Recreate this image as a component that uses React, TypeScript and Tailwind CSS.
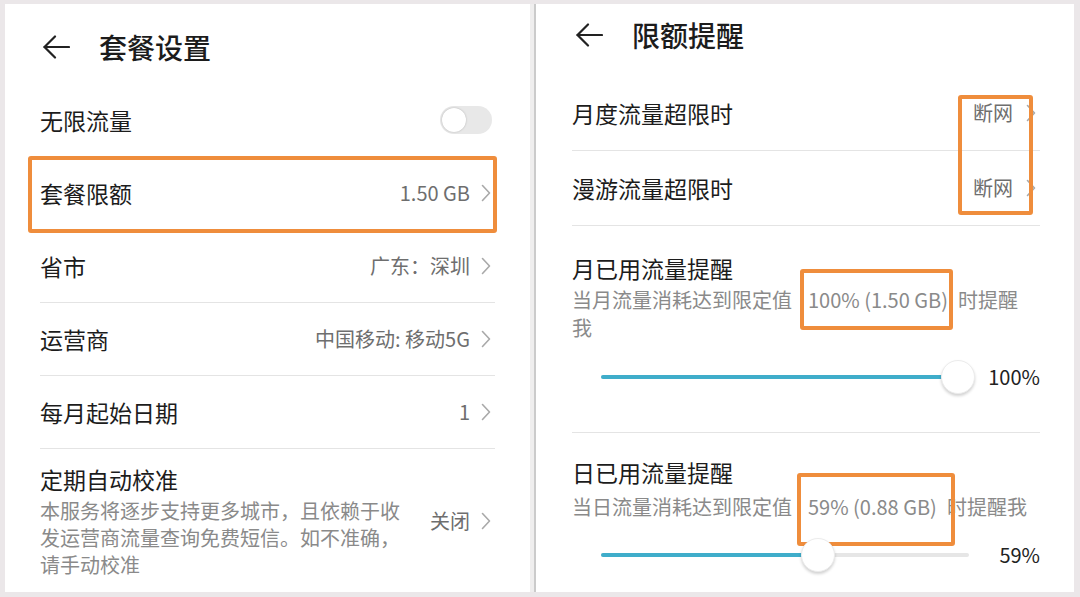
import React from 'react';

const ORANGE = 'border-[#ef8d3c]';

function BackArrow() {
  return (
    <svg width="28" height="24" viewBox="0 0 28 24" fill="none" stroke="#222" strokeWidth="2.2" strokeLinecap="round" strokeLinejoin="round">
      <path d="M27 12H2.5" />
      <path d="M13 1.5L2.5 12 13 22.5" />
    </svg>
  );
}

function Chevron() {
  return (
    <svg width="10" height="18" viewBox="0 0 10 18" fill="none" stroke="#a9a9a9" strokeWidth="1.6" strokeLinecap="round" strokeLinejoin="round">
      <path d="M1.5 1.5L8.5 9 1.5 16.5" />
    </svg>
  );
}

function Toggle() {
  return (
    <div className="w-[52px] h-[28px] rounded-full bg-[#e8e8e8] p-[2px] mr-[3px] flex items-center">
      <div className="w-[24px] h-[24px] rounded-full bg-white shadow-[0_0_2px_rgba(0,0,0,0.25)]" />
    </div>
  );
}

function Slider({ value, label }: { value: number; label: string }) {
  return (
    <div className="flex items-center gap-[30px] pl-[29px]">
      <div className="relative flex-1 h-[36px] flex items-center">
        <div className="w-full h-[4px] rounded-full bg-[#e6e6e6]">
          <div className="h-full rounded-full bg-[#3fadca]" style={{ width: `${value}%` }} />
        </div>
        <div
          className="absolute top-[1px] w-[34px] h-[34px] rounded-full bg-white border border-[#ececec] shadow-[0_2px_3px_rgba(0,0,0,0.18)]"
          style={{ left: `calc(${value}% - 17px)` }}
        />
      </div>
      <span className="text-[20px] text-[#222]">{label}</span>
    </div>
  );
}

function Row({
  label,
  value,
  right,
  height,
  gap = 'gap-[11px]',
  highlight,
}: {
  label: string;
  value?: string;
  right?: React.ReactNode;
  height: string;
  gap?: string;
  highlight?: boolean;
}) {
  return (
    <div className={`relative ${height} flex items-center justify-between border-b border-[#e4e4e4]`}>
      <span className="text-[23px] text-[#1c1c1c]">{label}</span>
      {right ?? (
        <div className={`flex items-center ${gap} pr-[4px]`}>
          <span className="text-[20px] text-[#6e6e6e]">{value}</span>
          <Chevron />
        </div>
      )}
      {highlight && (
        <span className={`absolute left-[-12px] right-[-2px] top-[-1px] bottom-[-4px] border-[4px] ${ORANGE} rounded-[3px]`} />
      )}
    </div>
  );
}

function PlanSettings() {
  return (
    <section className="w-[525px] bg-white px-[35px] flex flex-col">
      <header className="h-[80px] flex items-start gap-[29px] pt-[26px] pl-[2px]">
        <div className="h-[34px] flex items-center">
          <BackArrow />
        </div>
        <h1 className="text-[28px] leading-[34px] font-medium text-[#1c1c1c]">套餐设置</h1>
      </header>

      <Row label="无限流量" height="h-[73px]" right={<Toggle />} />
      <Row label="套餐限额" value="1.50 GB" height="h-[73px]" highlight />
      <Row label="省市" value="广东：深圳" height="h-[73px]" />
      <Row label="运营商" value="中国移动: 移动5G" height="h-[73px]" />
      <Row label="每月起始日期" value="1" height="h-[73px]" />

      {/* 定期自动校准 */}
      <div className="flex items-center justify-between pt-[14px]">
        <div className="w-[372px]">
          <div className="text-[23px] leading-[32px] text-[#1c1c1c]">定期自动校准</div>
          <p className="mt-[2px] text-[20px] leading-[27px] text-[#8a8a8a]">
            本服务将逐步支持更多城市，且依赖于收发运营商流量查询免费短信。如不准确，请手动校准
          </p>
        </div>
        <div className="flex items-center gap-[11px] pr-[4px]">
          <span className="text-[20px] text-[#6e6e6e]">关闭</span>
          <Chevron />
        </div>
      </div>
    </section>
  );
}

function Highlighted({ text, box, className }: { text: string; box: string; className: string }) {
  return (
    <span className={`relative ${className}`}>
      {text}
      <span className={`absolute ${box} border-[4px] ${ORANGE} rounded-[3px]`} />
    </span>
  );
}

function LimitReminder() {
  return (
    <section className="w-[538px] bg-white pl-[36px] pr-[34px] flex flex-col">
      <header className="h-[72px] flex items-start gap-[29px] pt-[14px] pl-[3px]">
        <div className="h-[34px] flex items-center">
          <BackArrow />
        </div>
        <h1 className="text-[28px] leading-[34px] font-medium text-[#1c1c1c]">限额提醒</h1>
      </header>

      <div className="relative">
        <Row label="月度流量超限时" value="断网" height="h-[75px]" gap="gap-[13px]" />
        <Row label="漫游流量超限时" value="断网" height="h-[75px]" gap="gap-[13px]" />
        <span className={`absolute right-[7px] top-[19px] w-[75px] h-[120px] border-[4px] ${ORANGE} rounded-[3px]`} />
      </div>

      {/* 月已用流量提醒 */}
      <div className="border-b border-[#e4e4e4] pt-[26px] pb-[37px]">
        <div className="text-[23px] leading-[32px] text-[#1c1c1c]">月已用流量提醒</div>
        <p className="mt-[2px] max-w-[462px] text-[20px] leading-[28px] text-[#8a8a8a]">
          当月流量消耗达到限定值
          <Highlighted
            text="100% (1.50 GB)"
            className="ml-[16px] mr-[10px]"
            box="left-[-8px] right-[-5px] top-[-16px] bottom-[-16px]"
          />
          时提醒我
        </p>
        <div className="mt-[17px]">
          <Slider value={100} label="100%" />
        </div>
      </div>

      {/* 日已用流量提醒 */}
      <div className="pt-[23px]">
        <div className="text-[23px] leading-[32px] text-[#1c1c1c]">日已用流量提醒</div>
        <p className="mt-[5px] max-w-[462px] text-[20px] leading-[28px] text-[#8a8a8a]">
          当日流量消耗达到限定值
          <Highlighted
            text="59% (0.88 GB)"
            className="ml-[16px] mr-[10px]"
            box="left-[-11px] right-[-18px] top-[-19px] bottom-[-25px]"
          />
          时提醒我
        </p>
        <div className="mt-[16px]">
          <Slider value={59} label="59%" />
        </div>
      </div>
    </section>
  );
}

export default function App() {
  return (
    <div className="w-[1080px] h-[597px] overflow-hidden bg-[#ebe7e9] pt-[4px] pb-[5px] pl-[5px] pr-[6px] flex font-['Noto_Sans_CJK_SC','Noto_Sans',sans-serif]">
      <PlanSettings />
      <div className="w-[4px] bg-[#efeeee]" />
      <div className="w-[2px] bg-[#cbcbcb]" />
      <LimitReminder />
    </div>
  );
}
